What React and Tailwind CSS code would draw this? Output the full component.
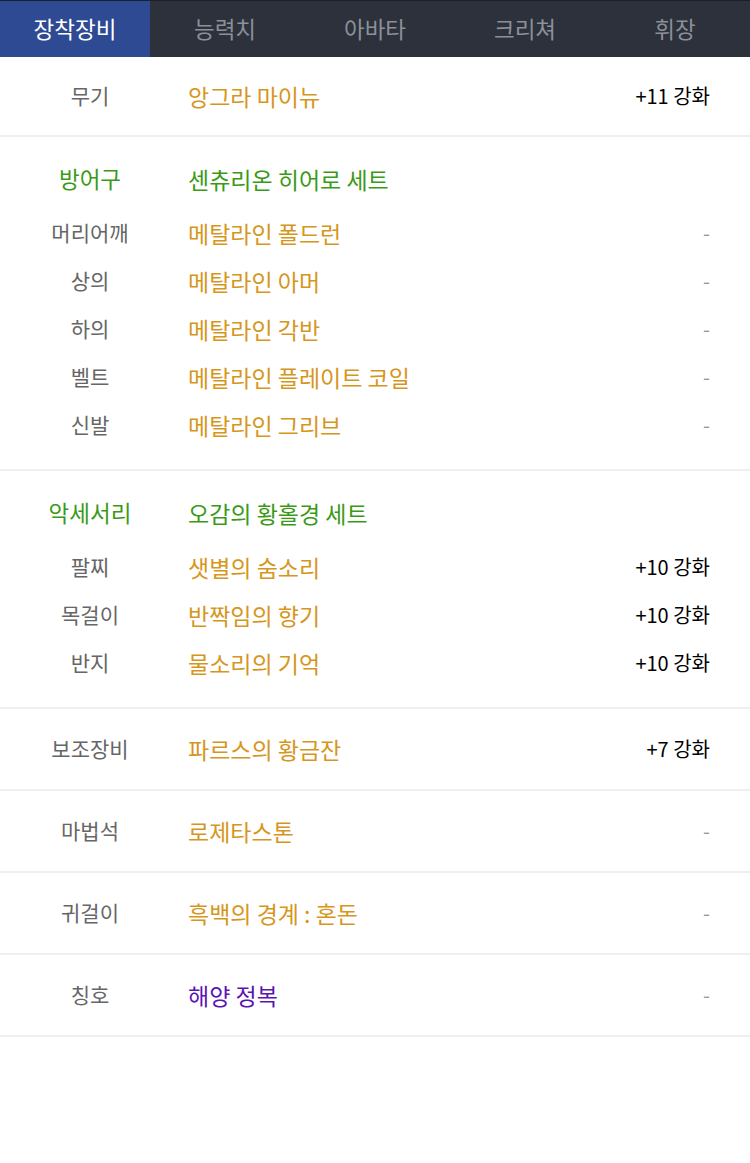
const tabs = ['장착장비', '능력치', '아바타', '크리쳐', '휘장'];

const font = { fontFamily: "'Noto Sans CJK KR', 'Noto Sans', sans-serif" };

function Row({ label, name, value, nameClass = 'text-[#d6961c]', labelClass = 'text-[#666666] text-[21px]' }) {
  return (
    <div className="flex items-center h-[48px]">
      <div className={`w-[180px] text-center ${labelClass}`}>{label}</div>
      <div className={`ml-[8px] flex-1 text-[23px] ${nameClass}`}>{name}</div>
      <div className={`pr-[40px] text-[20px] ${value === '-' ? 'text-[#999999]' : 'text-black'}`}>{value}</div>
    </div>
  );
}

function Single(props) {
  return (
    <div className="h-[82px] flex items-center border-b-2 border-[#efefef]">
      <div className="w-full">
        <Row {...props} />
      </div>
    </div>
  );
}

function Group({ label, setName, items }) {
  return (
    <div className="pt-[18px] pb-[20px] border-b-2 border-[#efefef]">
      <Row label={label} name={setName} value="" labelClass="text-[#3a9a16] text-[22.5px]" nameClass="text-[#3a9a16]" />
      <div className="mt-[6px]">
        {items.map(([l, n, v]) => (
          <Row key={l} label={l} name={n} value={v} />
        ))}
      </div>
    </div>
  );
}

export default function App() {
  return (
    <div className="w-[750px] min-h-[1163px] bg-white" style={font}>
      <div className="flex h-[57px] bg-[#2c313c] border-t border-[#1c2029]">
        {tabs.map((t, i) => (
          <div
            key={t}
            className={`flex-1 flex items-center justify-center text-[22.5px] ${
              i === 0 ? 'bg-[#2d4a93] text-white' : 'text-[#8b9099]'
            }`}
          >
            {t}
          </div>
        ))}
      </div>

      <div className="h-[80px] flex items-center border-b-2 border-[#efefef]">
        <div className="w-full">
          <Row label="무기" name="앙그라 마이뉴" value="+11 강화" />
        </div>
      </div>

      <Group
        label="방어구"
        setName="센츄리온 히어로 세트"
        items={[
          ['머리어깨', '메탈라인 폴드런', '-'],
          ['상의', '메탈라인 아머', '-'],
          ['하의', '메탈라인 각반', '-'],
          ['벨트', '메탈라인 플레이트 코일', '-'],
          ['신발', '메탈라인 그리브', '-'],
        ]}
      />

      <Group
        label="악세서리"
        setName="오감의 황홀경 세트"
        items={[
          ['팔찌', '샛별의 숨소리', '+10 강화'],
          ['목걸이', '반짝임의 향기', '+10 강화'],
          ['반지', '물소리의 기억', '+10 강화'],
        ]}
      />

      <Single label="보조장비" name="파르스의 황금잔" value="+7 강화" />
      <Single label="마법석" name="로제타스톤" value="-" />
      <Single label="귀걸이" name="흑백의 경계 : 혼돈" value="-" />
      <Single label="칭호" name="해양 정복" value="-" nameClass="text-[#5a14b4]" />
    </div>
  );
}
